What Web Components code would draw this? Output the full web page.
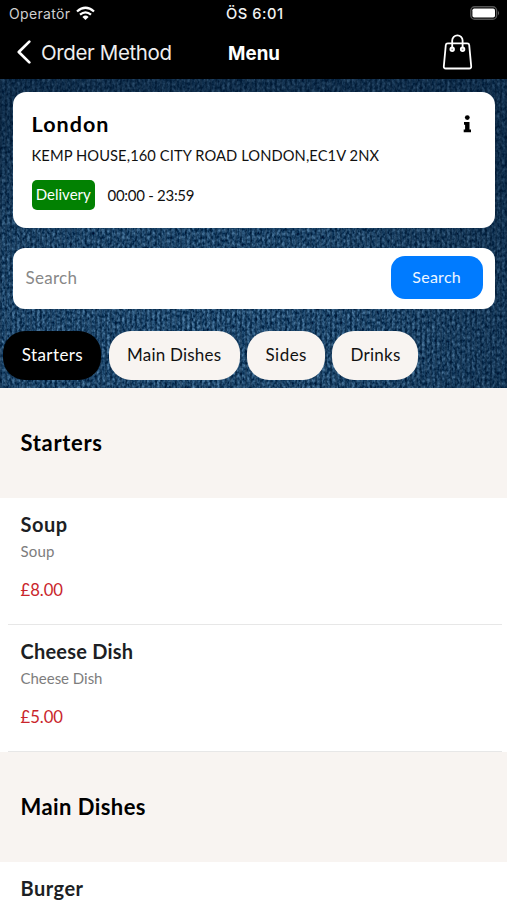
<!DOCTYPE html>
<html lang="en">
<head>
<meta charset="utf-8">
<title>Menu</title>
<style>
html, body { margin: 0; height: 900px; overflow: hidden; background: #fff; }
body { font-family: Lato, "Open Sans", sans-serif; color: #000; }
</style>
</head>
<body>
<menu-app></menu-app>
<script>
function define(name, html, setup) {
  const template = document.createElement('template');
  template.innerHTML = html;
  customElements.define(name, class extends HTMLElement {
    connectedCallback() {
      if (this.shadowRoot) return;
      this.attachShadow({ mode: 'open' }).append(template.content.cloneNode(true));
      if (setup) setup(this, this.shadowRoot);
    }
  });
}

/* One line of text, tracked so that it fills the width given in "w". */
define('fit-text', `
<style>:host{display:block;white-space:nowrap;width:max-content;flex:none}span{display:inline-block}</style>
<span></span>`, (el, root) => {
  const span = root.querySelector('span');
  const text = el.getAttribute('text');
  span.textContent = text;
  const target = parseFloat(el.getAttribute('w'));
  const spacing = (target - span.getBoundingClientRect().width) / (text.length - 1);
  span.style.letterSpacing = spacing.toFixed(3) + 'px';
  span.style.marginRight = (-spacing).toFixed(3) + 'px';
});

define('status-bar', `
<style>
:host{display:grid;grid-template-columns:1fr auto 1fr;align-items:center;height:28px;padding:0 7px 0 9px;background:#000;color:#fff;font:14px/28px Inter,sans-serif}
.left{display:flex;align-items:center;gap:6px;color:#cfcfcf}
.time{font-size:14.7px;font-weight:500;color:#f2f2f2}
svg{display:block}.left svg{margin-top:-2px}.battery{justify-self:end;margin-top:-2px}
</style>
<div class="left"><fit-text text="Operatör" w="61"></fit-text>
<svg width="19" height="15" viewBox="0 0 19 15" fill="none" stroke="#fff" stroke-width="2.3"><path d="M1 5.5Q9.5-2 18 5.5M4 8.7Q9.5 4 15 8.7"/><path d="M9.5 14 6.4 10.9Q9.5 8.3 12.6 10.9Z" fill="#fff" stroke="none"/></svg></div>
<fit-text class="time" text="ÖS 6:01" w="57"></fit-text>
<svg class="battery" width="30" height="14" viewBox="0 0 30 14"><rect x=".8" y=".8" width="25.8" height="12.4" rx="3.8" stroke="#555" stroke-width="1.4" fill="#000"/><rect x="2.4" y="2.4" width="22.6" height="9.2" rx="1.8" fill="#fff"/><path d="M28 4.7q2 2.3 0 4.6z" fill="#666"/></svg>`);

define('nav-bar', `
<style>
:host{display:grid;grid-template-columns:1fr auto 1fr;align-items:center;height:51px;padding:0 34px 0 16px;background:#000;color:#fff;box-sizing:border-box;font:20.5px/49px Inter,sans-serif}
.back{display:flex;align-items:center;gap:9px;height:49px;align-self:start;color:#eee}
.title{font-size:18.7px;font-weight:700;line-height:51px;margin-left:19px}
svg{display:block}.back svg{margin-top:-1px}.bag{justify-self:end;margin-top:-3px}
</style>
<div class="back"><svg width="16" height="24" viewBox="0 0 16 24" fill="none" stroke="#fff" stroke-width="2.7" stroke-linecap="round" stroke-linejoin="round"><path d="M13.3 1.6 2.8 12 13.3 22.4"/></svg><fit-text text="Order Method" w="131"></fit-text></div>
<fit-text class="title" text="Menu" w="52"></fit-text>
<svg class="bag" width="31" height="36" viewBox="0 0 31 36" fill="none" stroke="#fff" stroke-width="1.8" stroke-linejoin="round"><path d="M5.8 9.3H25.2Q27 9.3 27.2 11L29.2 32.3Q29.4 34.5 27.2 34.5H3.8Q1.6 34.5 1.8 32.3L3.8 11Q4 9.3 5.8 9.3Z"/><path d="M10.2 15.2V6.6a5.2 5.2 0 0 1 10.4 0v8.6"/><circle cx="10.2" cy="15.3" r="1.8" fill="#999"/><circle cx="20.6" cy="15.3" r="1.8" fill="#999"/></svg>`);

/* Woven denim: fine noise stretched along the vertical threads. */
define('denim-panel', `
<style>
:host{display:block;position:relative;height:309px;background:#1c4268;overflow:hidden}
.cloth{position:absolute;inset:0;width:100%;height:100%}
.content{position:relative;height:100%;box-sizing:border-box;padding:12.5px 12.5px 0 13px}
</style>
<svg class="cloth" width="507" height="309" viewBox="0 0 507 309">
<defs>
<filter id="weave" x="0" y="0" width="100%" height="100%" color-interpolation-filters="sRGB"><feTurbulence type="fractalNoise" baseFrequency=".4 .28" numOctaves="2" seed="8"/><feColorMatrix values="0.62 0 0 0 -.17  0.68 0 0 0 -.03  0.7 0 0 0 .11  0 0 0 0 1"/></filter>
<pattern id="rib" width="5" height="5" patternUnits="userSpaceOnUse"><path d="M1 0V5" stroke="#05162c" stroke-opacity=".42" stroke-width="1.6"/></pattern>
<radialGradient id="shade" cx=".38" cy=".82" r=".78"><stop offset="0" stop-color="#001329" stop-opacity="0"/><stop offset=".5" stop-color="#001329" stop-opacity=".08"/><stop offset="1" stop-color="#001329" stop-opacity=".5"/></radialGradient>
</defs>
<rect width="507" height="309" filter="url(#weave)"/><rect width="507" height="309" fill="url(#rib)"/><rect width="507" height="309" fill="url(#shade)"/>
</svg>
<div class="content"><slot></slot></div>`);

define('branch-card', `
<style>
:host{display:block;box-sizing:border-box;height:136.5px;padding:19.5px 23px 0 18.5px;border-radius:13px;background:#fff}
.top,.hours{display:flex;align-items:center}
.top{justify-content:space-between;height:26px}
.name{font-size:21.5px;font-weight:700;line-height:26px}
.address{font-size:14.7px;line-height:20px;margin-top:8px;color:#111}
.hours{margin-top:15px;height:30px;gap:12.5px;font-size:15px;color:#111}
.badge{display:flex;justify-content:center;width:63.5px;height:30px;border-radius:5px;background:#028102;color:#fff;line-height:29px}
.time{line-height:31px}
svg{display:block}
</style>
<div class="top"><fit-text class="name" text="London" w="77"></fit-text><svg width="9" height="18" viewBox="0 0 9 18"><circle cx="4.3" cy="2.6" r="2.4"/><path d="M1 7H6.5V14.5H8V17.3H.7V14.5H2.1V9.7H1Z"/></svg></div>
<fit-text class="address" text="KEMP HOUSE,160 CITY ROAD LONDON,EC1V 2NX" w="347.5"></fit-text>
<div class="hours"><div class="badge"><fit-text text="Delivery" w="55"></fit-text></div><fit-text class="time" text="00:00 - 23:59" w="87"></fit-text></div>`);

define('search-box', `
<style>
:host{display:flex;justify-content:space-between;box-sizing:border-box;height:61px;margin-top:19.5px;padding:8px 12px 0 12.5px;border-radius:12px;background:#fff}
.hint{font-size:17px;line-height:44px;color:#888}
.go{display:flex;justify-content:center;width:92px;height:43px;border-radius:14px;background:#007bff;color:#eef6ff;font-size:16px;line-height:41px}
</style>
<fit-text class="hint" text="Search" w="51.5"></fit-text>
<div class="go"><fit-text text="Search" w="48.5"></fit-text></div>`);

define('category-chip', `
<style>
:host{display:flex;justify-content:center;box-sizing:border-box;height:49px;border-radius:22px;background:#f8f4f1;color:#111;font-size:17px;line-height:47px}
:host([active]){background:#000;color:#fff}
</style><slot></slot>`);

define('category-row', `
<style>:host{display:flex;gap:7.4px;margin:22px 0 0 -9.8px}
.a{width:98px}.b{width:131px}.c{width:78px}.d{width:86px}</style>
<category-chip class="a" active><fit-text text="Starters" w="61"></fit-text></category-chip>
<category-chip class="b"><fit-text text="Main Dishes" w="94"></fit-text></category-chip>
<category-chip class="c"><fit-text text="Sides" w="41"></fit-text></category-chip>
<category-chip class="d"><fit-text text="Drinks" w="50"></fit-text></category-chip>`);

define('menu-section', `
<style>
:host{display:block}
header{box-sizing:border-box;height:110px;padding-left:20.5px;background:#f8f4f1;font-size:22px;font-weight:700;line-height:109px}
</style>
<header></header><slot></slot>`, (el, root) => {
  root.querySelector('header').innerHTML = `<fit-text text="${el.getAttribute('label')}" w="${el.getAttribute('w')}"></fit-text>`;
});

define('menu-item', `
<style>
:host{display:block;box-sizing:border-box;height:127px;margin:0 5px 0 8px;padding:14px 0 0 12.5px;border-bottom:1.5px solid #e7e7e7}
.name{font-size:20px;font-weight:700;line-height:25px;color:#1d1f24}
.note{margin-top:4px;font-size:15px;line-height:20px;color:#7d7d7d}
.price{margin-top:18px;font-size:16.7px;line-height:22px;color:#c9252b}
</style>`, (el, root) => {
  for (const part of ['name', 'note', 'price']) {
    const [text, width] = (el.getAttribute(part) || '').split('|');
    if (!text) continue;
    const line = document.createElement('fit-text');
    line.className = part;
    line.setAttribute('text', text);
    line.setAttribute('w', width);
    root.append(line);
  }
});

define('menu-app', `
<style>:host{display:block;width:507px;height:900px;overflow:hidden;background:#fff}</style>
<status-bar></status-bar>
<nav-bar></nav-bar>
<denim-panel><branch-card></branch-card><search-box></search-box><category-row></category-row></denim-panel>
<menu-section label="Starters" w="81.5">
<menu-item name="Soup|46.5" note="Soup|34" price="£8.00|42.5"></menu-item>
<menu-item name="Cheese Dish|112.5" note="Cheese Dish|82" price="£5.00|42.5"></menu-item>
</menu-section>
<menu-section label="Main Dishes" w="125"><menu-item name="Burger|62.5"></menu-item></menu-section>`);
</script>
</body>
</html>
